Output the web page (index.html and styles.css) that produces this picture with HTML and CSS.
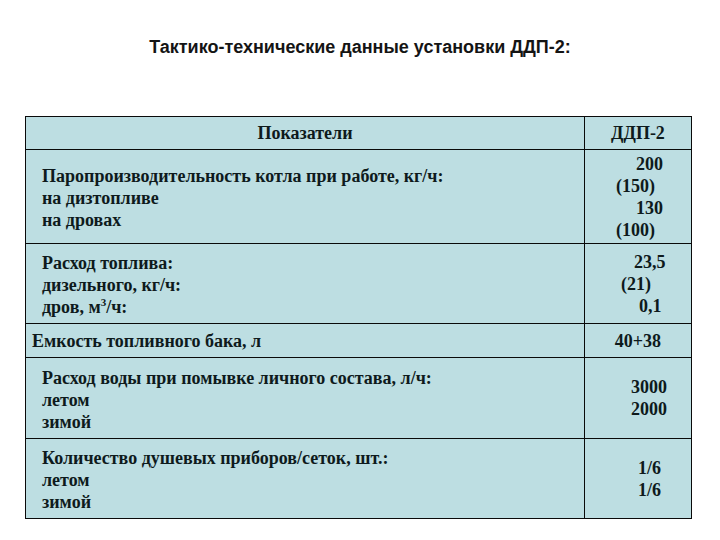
FILE: index.html
```html
<!DOCTYPE html>
<html lang="ru">
<head>
<meta charset="utf-8">
<title>ДДП-2</title>
<link rel="stylesheet" href="styles.css">
</head>
<body>
<div class="page">
  <h1 class="title">Тактико-технические данные установки ДДП-2:</h1>
  <table class="spec">
    <tr class="r-head">
      <th class="c-name">Показатели</th>
      <th class="c-val">ДДП-2</th>
    </tr>
    <tr class="r1">
      <td class="c-name ind">Паропроизводительность котла при работе, кг/ч:<br>на дизтопливе<br>на дровах</td>
      <td class="c-val vals"><span class="o51">200</span><span class="o31">(150)</span><span class="o51">130</span><span class="o31">(100)</span></td>
    </tr>
    <tr class="r2">
      <td class="c-name ind">Расход топлива:<br>дизельного, кг/ч:<br>дров, м<sup>3</sup>/ч:</td>
      <td class="c-val vals"><span class="o49">23,5</span><span class="o36">(21)</span><span class="o54">0,1</span></td>
    </tr>
    <tr class="r3">
      <td class="c-name ind-s">Емкость топливного бака, л</td>
      <td class="c-val center">40+38</td>
    </tr>
    <tr class="r4">
      <td class="c-name ind">Расход воды при помывке личного состава, л/ч:<br>летом<br>зимой</td>
      <td class="c-val vals"><span class="o46">3000</span><span class="o46">2000</span></td>
    </tr>
    <tr class="r5">
      <td class="c-name ind">Количество душевых приборов/сеток, шт.:<br>летом<br>зимой</td>
      <td class="c-val vals"><span class="o53">1/6</span><span class="o53">1/6</span></td>
    </tr>
  </table>
</div>
</body>
</html>
```
FILE: styles.css
```css
html, body {
  margin: 0;
  padding: 0;
  background: #ffffff;
}
.page {
  width: 720px;
  height: 540px;
  padding-top: 37px;
  box-sizing: border-box;
}
.title {
  margin: 0;
  font-family: "Liberation Sans", Arial, sans-serif;
  font-weight: bold;
  font-size: 18px;
  line-height: 20px;
  text-align: center;
  color: #141414;
}
.spec {
  margin: 59px 0 0 25px;
  width: 664px;
  border-collapse: collapse;
  table-layout: fixed;
  background: #bddee2;
  font-family: "Liberation Serif", "Times New Roman", serif;
  font-weight: bold;
  font-size: 18px;
  line-height: 22px;
  color: #0e1a1c;
}
.spec th, .spec td {
  border: 1px solid #0a0a0a;
  padding: 0;
  vertical-align: middle;
}
.spec th {
  font-weight: bold;
  text-align: center;
}
.c-name { width: 558px; }
.c-val { width: 106px; }
.r-head { height: 33px; }
.r1 { height: 94px; }
.r2 { height: 80px; }
.r3 { height: 34px; }
.r4 { height: 81px; }
.r5 { height: 80px; }
.ind { padding: 3px 0 0 16px !important; }
.ind-s { padding-left: 6px !important; }
.center { text-align: center; }
.vals span { display: block; }
.spec sup {
  font-size: 11px;
  line-height: 0;
  vertical-align: 7px;
}
.o31 { padding-left: 31px; }
.o36 { padding-left: 36px; }
.o46 { padding-left: 46px; }
.o49 { padding-left: 49px; }
.o51 { padding-left: 51px; }
.o53 { padding-left: 53px; }
.o54 { padding-left: 54px; }
```
